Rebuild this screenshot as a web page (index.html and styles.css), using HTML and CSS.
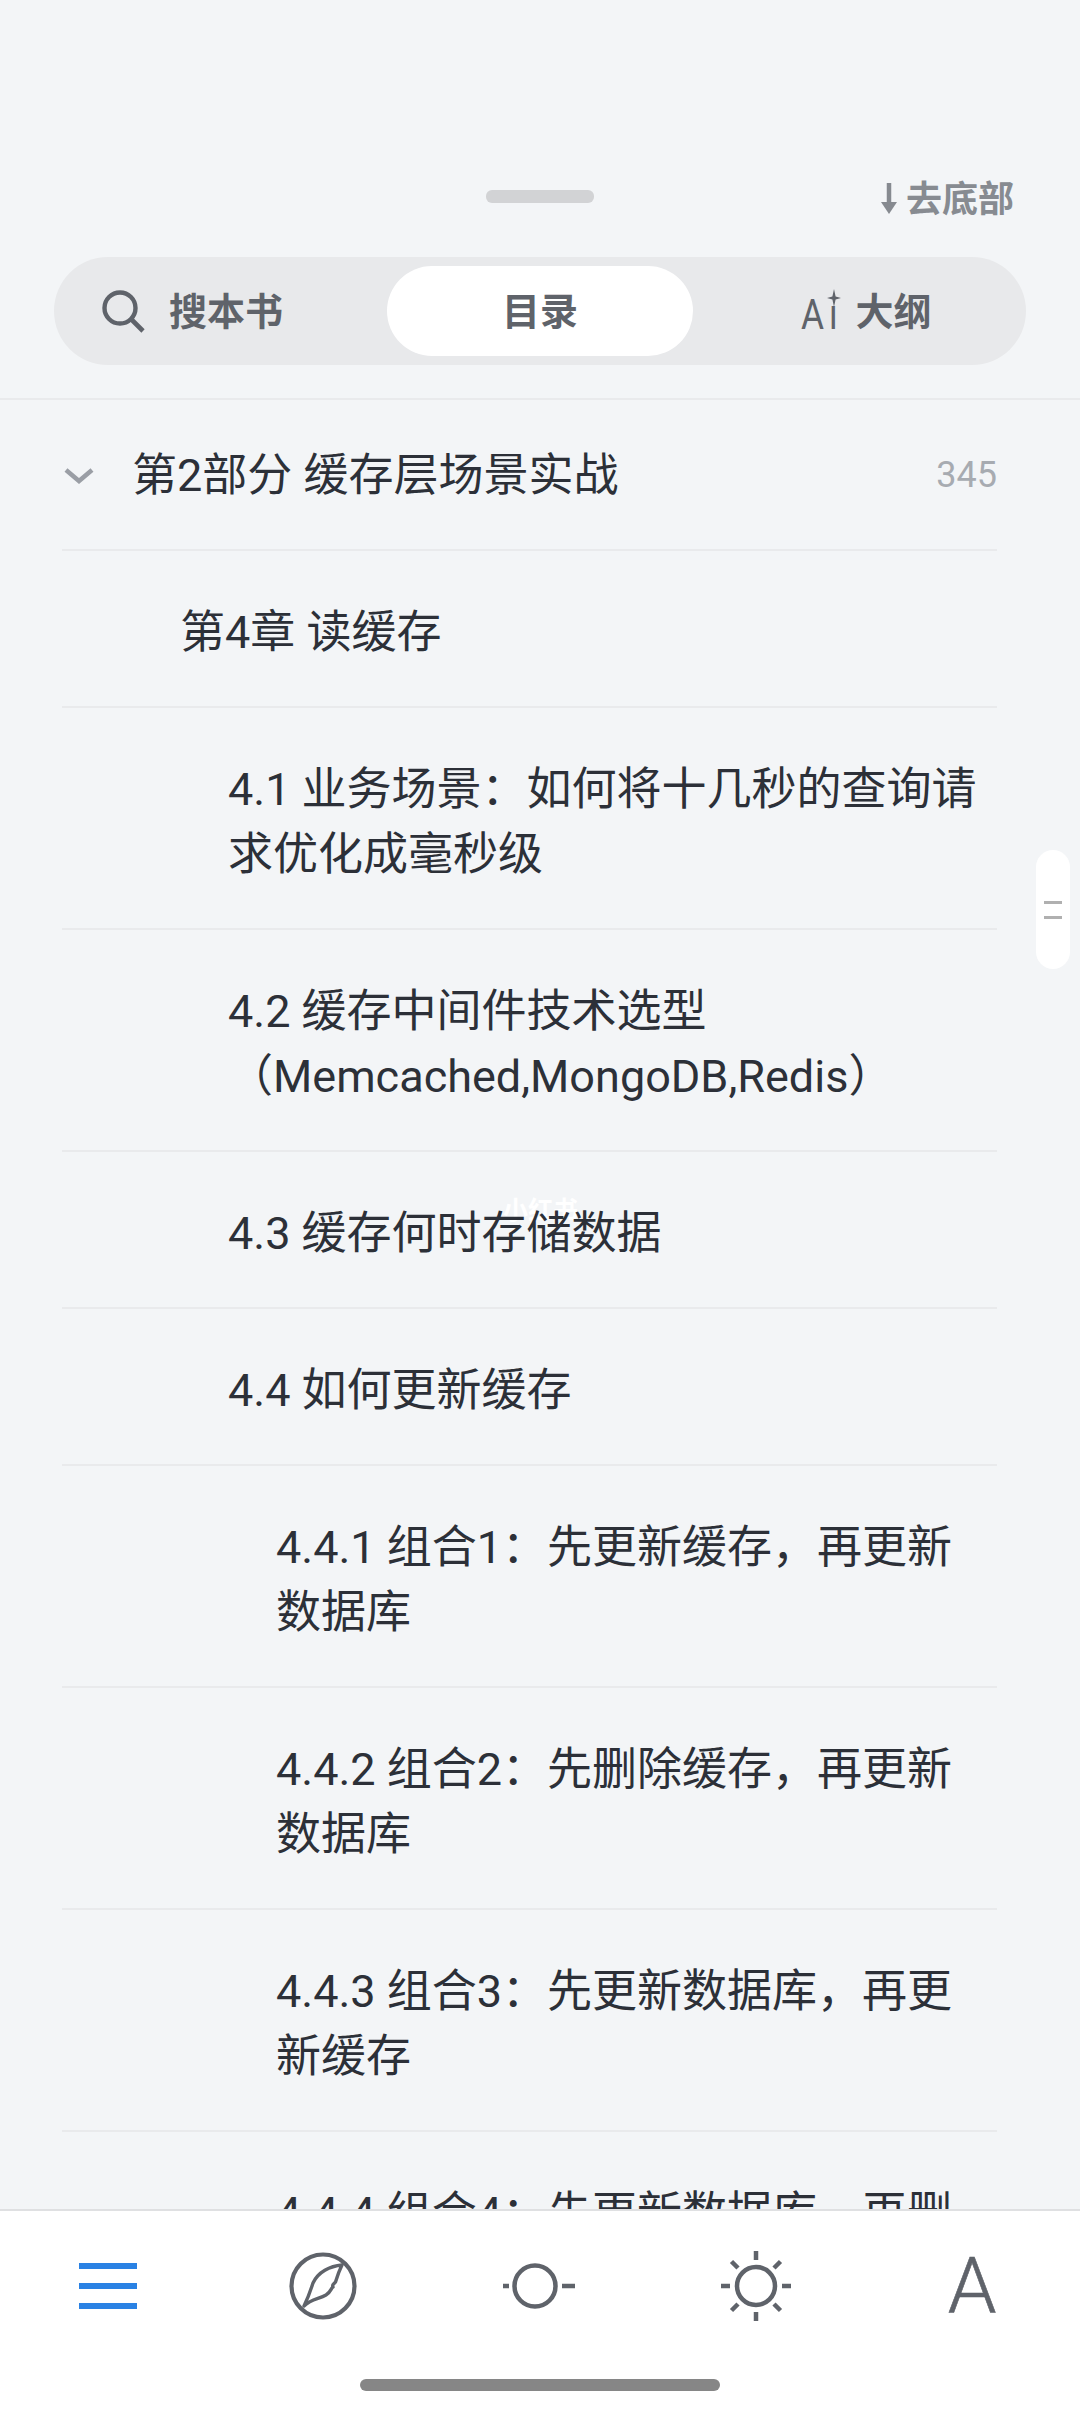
FILE: index.html
```html
<!DOCTYPE html>
<html lang="zh-CN">
<head>
<meta charset="utf-8">
<title>目录</title>
<link rel="stylesheet" href="styles.css">
</head>
<body>
<div class="screen">
  <header class="head">
    <div class="head-top">
      <span class="handle"></span>
      <a class="to-bottom">
        <svg class="arrow" viewBox="0 0 18 32" width="18" height="32"><path d="M9 1V26" stroke="#868a90" stroke-width="4.500" fill="none"/><path d="M1 20H17L9 32Z" fill="#868a90"/></svg>
        <span>去底部</span>
      </a>
    </div>
    <div class="tabs">
      <div class="tab tab-search">
        <svg viewBox="0 0 44 44" width="44" height="44"><circle cx="19" cy="19" r="15.500" fill="none" stroke="#5f636a" stroke-width="4.400"/><path d="M30 30L42 42" stroke="#5f636a" stroke-width="4.600" fill="none"/></svg>
        <span>搜本书</span>
      </div>
      <div class="tab tab-active"><span>目录</span></div>
      <div class="tab tab-ai">
        <span class="ai"><span class="ai-text">Aı</span><svg class="spark" viewBox="0 0 14 18" width="14" height="18"><path d="M7 0L8.600 7.400L14 9L8.600 10.600L7 18L5.400 10.600L0 9L5.400 7.400Z" fill="#5f636a"/></svg></span>
        <span>大纲</span>
      </div>
    </div>
  </header>

  <main class="toc">
    <div class="row lv0">
      <svg class="chev" viewBox="0 0 30 16" width="30" height="16"><path d="M2 2L15 13L28 2" fill="none" stroke="#9a9ea5" stroke-width="4.500"/></svg>
      <span class="title">第2部分 缓存层场景实战</span>
      <span class="page">345</span>
    </div>
    <div class="row lv1"><span class="title">第4章 读缓存</span></div>
    <div class="row lv2"><span class="title">4.1 业务场景：如何将十几秒的查询请求优化成毫秒级</span></div>
    <div class="row lv2"><span class="title">4.2 缓存中间件技术选型（Memcached,MongoDB,Redis）</span></div>
    <div class="row lv2 single"><span class="title">4.3 缓存何时存储数据</span></div>
    <div class="row lv2 single"><span class="title">4.4 如何更新缓存</span></div>
    <div class="row lv3"><span class="title">4.4.1 组合1：先更新缓存，再更新数据库</span></div>
    <div class="row lv3"><span class="title">4.4.2 组合2：先删除缓存，再更新数据库</span></div>
    <div class="row lv3"><span class="title">4.4.3 组合3：先更新数据库，再更新缓存</span></div>
    <div class="row lv3"><span class="title">4.4.4 组合4：先更新数据库，再删除缓存</span></div>
    <div class="mark">小红书</div>
    <div class="thumb"><i></i><i></i></div>
  </main>

  <footer class="bar">
    <nav class="nav">
      <svg viewBox="0 0 80 80" width="80" height="80"><path d="M11 20H69M11 40H69M11 60H69" stroke="#2a82e4" stroke-width="6" fill="none"/></svg>
      <svg viewBox="0 0 80 80" width="80" height="80"><circle cx="39" cy="40" r="31.500" fill="none" stroke="#5f636a" stroke-width="4.200"/><path d="M58 19C46 20 34 26 29 37C27 43 25 50 20 60C27 53 35 53 42 49C47 46 47 42 49 41C47.500 39 50 38 51.500 36C53 31 55 25 58 19Z" fill="none" stroke="#5f636a" stroke-width="3.400" stroke-linejoin="round"/></svg>
      <svg viewBox="0 0 80 80" width="80" height="80"><circle cx="35" cy="40" r="20.500" fill="none" stroke="#5f636a" stroke-width="4.500"/><path d="M3 40H9M62 40H75" stroke="#5f636a" stroke-width="4.500" fill="none"/></svg>
      <svg viewBox="0 0 80 80" width="80" height="80"><circle cx="40" cy="40" r="19" fill="none" stroke="#5f636a" stroke-width="4.500"/><path d="M40 5V14M40 66V75M5 40H14M66 40H75M15.500 15.500L22 22M64.500 15.500L58 22M15.500 64.500L22 58M64.500 64.500L58 58" stroke="#5f636a" stroke-width="4.500" fill="none"/></svg>
      <span class="font-a">A</span>
    </nav>
    <div class="home"></div>
  </footer>
</div>
</body>
</html>
```

FILE: styles.css
```css
* { box-sizing: border-box; }
html, body { margin: 0; padding: 0; }
body {
  font-family: Roboto, "Noto Sans CJK SC", sans-serif;
  background: #f3f5f7;
  color: #2c3038;
}
.screen {
  width: 1080px;
  height: 2412px;
  display: flex;
  flex-direction: column;
  overflow: hidden;
}

/* header */
.head {
  height: 400px;
  flex: none;
  padding-top: 174px;
  border-bottom: 2px solid #e9eaec;
}
.head-top {
  position: relative;
  height: 48px;
  display: flex;
  justify-content: flex-end;
  align-items: center;
  padding-right: 66px;
}
.handle {
  position: absolute;
  left: 486px;
  top: 16px;
  width: 108px;
  height: 13px;
  border-radius: 6px;
  background: #d2d3d5;
}
.to-bottom {
  display: flex;
  align-items: center;
  gap: 8px;
  font-size: 36px;
  font-weight: 700;
  color: #878b91;
}
.to-bottom span { margin-bottom: 5px; }
.tabs {
  margin: 35px 54px 0;
  height: 108px;
  padding: 9px 0;
  border-radius: 54px;
  background: #e8e9eb;
  display: grid;
  grid-template-columns: 1fr 306px 1fr;
}
.tab {
  display: flex;
  align-items: center;
  font-size: 38px;
  font-weight: 700;
  color: #5f636a;
}
.tab > span { margin-bottom: 6px; }
.tab-search { padding-left: 47px; gap: 24px; }
.tab-active {
  justify-content: center;
  background: #fff;
  border-radius: 45px;
}
.tab-ai { justify-content: center; padding-left: 14px; gap: 18px; }
.tab > .ai {
  position: relative;
  margin: 5px 0 0;
  width: 36px;
  font-size: 43px;
  line-height: 50px;
  font-weight: 400;
}
.ai-text {
  display: inline-block;
  transform: scaleX(0.82);
  transform-origin: left center;
  letter-spacing: 6px;
}
.spark { position: absolute; left: 26px; top: 0; }

/* list */
.toc {
  position: relative;
  flex: 1;
  min-height: 0;
  overflow: hidden;
  padding: 0 83px 0 62px;
}
.row {
  position: relative;
  z-index: 1;
  display: flex;
  align-items: center;
  min-height: 157px;
  padding: 34px 10px 26px 0;
  border-bottom: 2px solid #e9eaec;
  font-size: 45px;
  line-height: 65px;
}
.lv0 {
  min-height: 151px;
  padding: 31px 0 29px;
}
.lv0 .title { flex: 1; margin-left: 8px; }
.lv1 { padding-left: 118px; }
.lv2 { padding-left: 166px; min-height: 222px; }
.lv2.single { min-height: 157px; }
.lv3 { padding-left: 214px; min-height: 222px; }
.chev { flex: none; margin: 0 30px 0 2px; }
.page { font-size: 36px; color: #a7abb1; }
.mark {
  position: absolute;
  left: 503px;
  top: 790px;
  font-size: 25px;
  font-weight: 700;
  color: #fff;
}
.thumb {
  position: absolute;
  z-index: 2;
  left: 1036px;
  top: 450px;
  width: 34px;
  height: 119px;
  border-radius: 17px;
  background: #fff;
  display: flex;
  flex-direction: column;
  align-items: center;
  justify-content: center;
  gap: 12px;
}
.thumb i {
  width: 18px;
  height: 3px;
  background: #b0b0b0;
}

/* bottom bar */
.bar {
  flex: none;
  height: 203px;
  background: #fff;
  border-top: 2px solid #dfe0e2;
  position: relative;
}
.nav {
  display: grid;
  grid-template-columns: repeat(5, 216px);
  justify-items: center;
  align-items: center;
  padding-top: 34px;
  height: 116px;
}
.font-a {
  font-size: 78px;
  line-height: 80px;
  font-weight: 300;
  -webkit-text-stroke: 0.6px #5f636a;
  color: #5f636a;
  margin-top: 2px;
}
.home {
  position: absolute;
  left: 360px;
  top: 168px;
  width: 360px;
  height: 12px;
  border-radius: 6px;
  background: #868686;
}
```
